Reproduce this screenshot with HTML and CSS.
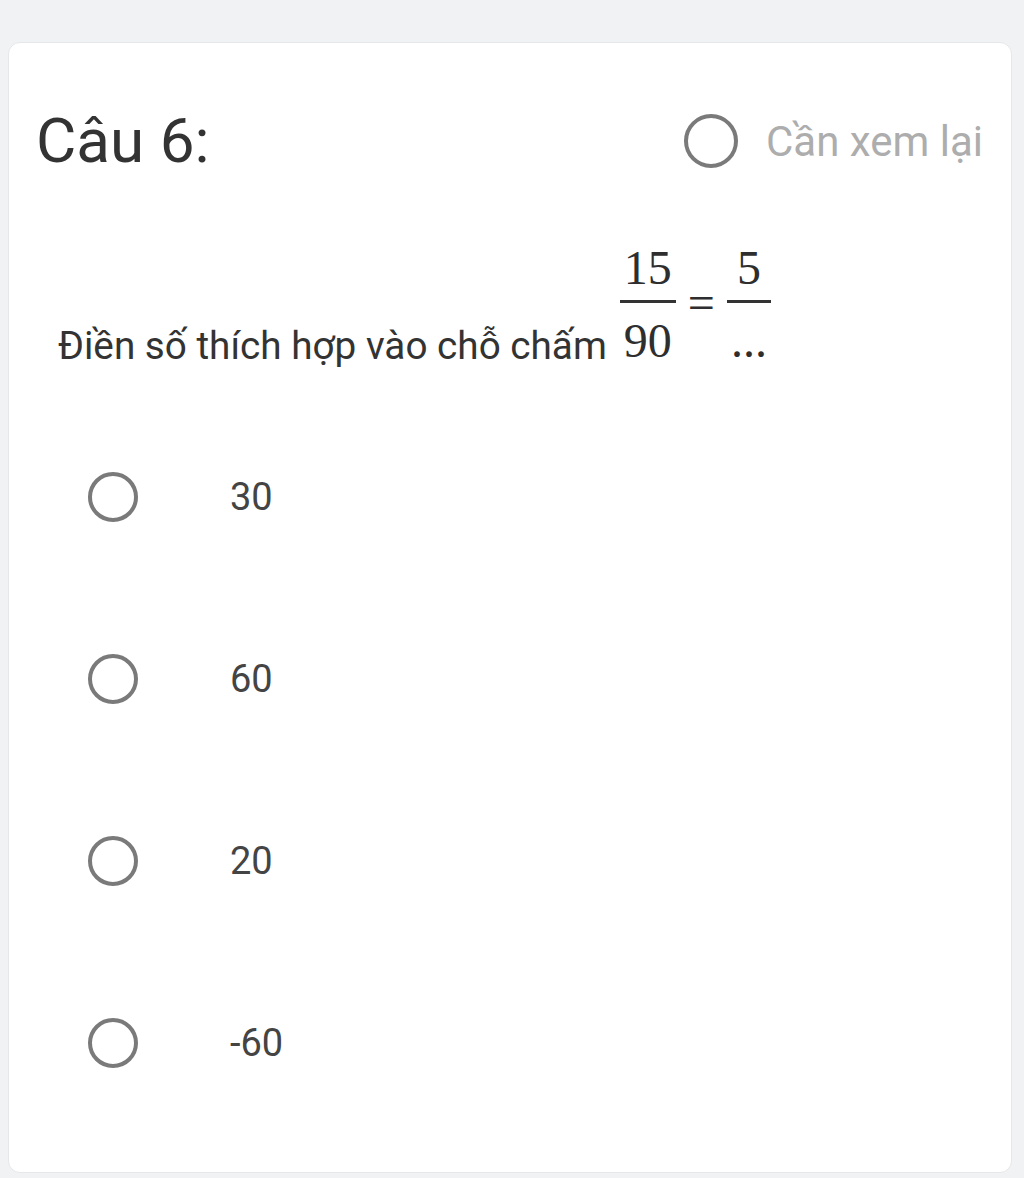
FILE: index.html
```html
<!DOCTYPE html>
<html lang="vi">
<head>
<meta charset="utf-8">
<title>Câu 6</title>
<link rel="stylesheet" href="styles.css">
</head>
<body>
<div class="card">
  <div class="head">
    <div class="title">Câu 6:</div>
    <label class="review"><span class="radio"></span><span class="review-text">Cần xem lại</span></label>
  </div>
  <div class="question">
    <span class="q-text">Điền số thích hợp vào chỗ chấm</span>
    <span class="math">
      <span class="frac"><span class="num">15</span><span class="den">90</span></span>
      <span class="eq">=</span>
      <span class="frac"><span class="num">5</span><span class="den">...</span></span>
    </span>
  </div>
  <div class="options">
    <label class="option"><span class="radio"></span><span class="opt-text">30</span></label>
    <label class="option"><span class="radio"></span><span class="opt-text">60</span></label>
    <label class="option"><span class="radio"></span><span class="opt-text">20</span></label>
    <label class="option"><span class="radio"></span><span class="opt-text">-60</span></label>
  </div>
</div>
</body>
</html>
```

FILE: styles.css
```css
html, body {
  margin: 0;
  padding: 0;
}
body {
  background: #f1f2f4;
  font-family: Roboto, "Noto Sans", "Liberation Sans", sans-serif;
}
.card {
  margin: 42px 12px 0 8px;
  background: #ffffff;
  border: 1px solid #e6e7e9;
  border-radius: 12px;
  padding: 63px 28px 38px 27px;
}
.head {
  display: flex;
  justify-content: space-between;
  align-items: center;
  height: 70px;
}
.title {
  font-size: 62px;
  line-height: 70px;
  color: #333333;
}
.review {
  display: flex;
  align-items: center;
  gap: 28px;
}
.review .radio {
  width: 54px;
  height: 54px;
}
.review-text {
  font-size: 42px;
  color: #adadad;
}
.radio {
  display: block;
  box-sizing: border-box;
  width: 50px;
  height: 50px;
  border: 4px solid #7a7a7a;
  border-radius: 50%;
  flex: none;
}
.question {
  display: flex;
  align-items: flex-end;
  margin-top: 68px;
  padding-left: 22px;
}
.q-text {
  font-size: 38.7px;
  line-height: 39px;
  color: #333333;
}
.math {
  display: flex;
  align-items: center;
  margin-left: 13px;
  font-family: "Liberation Serif", "Times New Roman", serif;
  font-size: 48px;
  color: #2e2e2e;
}
.frac {
  display: flex;
  flex-direction: column;
  align-items: center;
}
.num {
  display: block;
  line-height: 48px;
  padding: 0 4px 8px;
  border-bottom: 3px solid #333333;
  align-self: stretch;
  text-align: center;
}
.den {
  display: block;
  line-height: 48px;
  margin-top: 14px;
  padding: 0 4px;
}
.eq {
  margin: 0 12px 4px;
  line-height: 48px;
}
.options {
  margin-top: 41px;
  padding-left: 52px;
}
.option {
  display: flex;
  align-items: center;
  height: 182px;
  gap: 92px;
}
.opt-text {
  font-size: 38px;
  color: #444444;
}
```
